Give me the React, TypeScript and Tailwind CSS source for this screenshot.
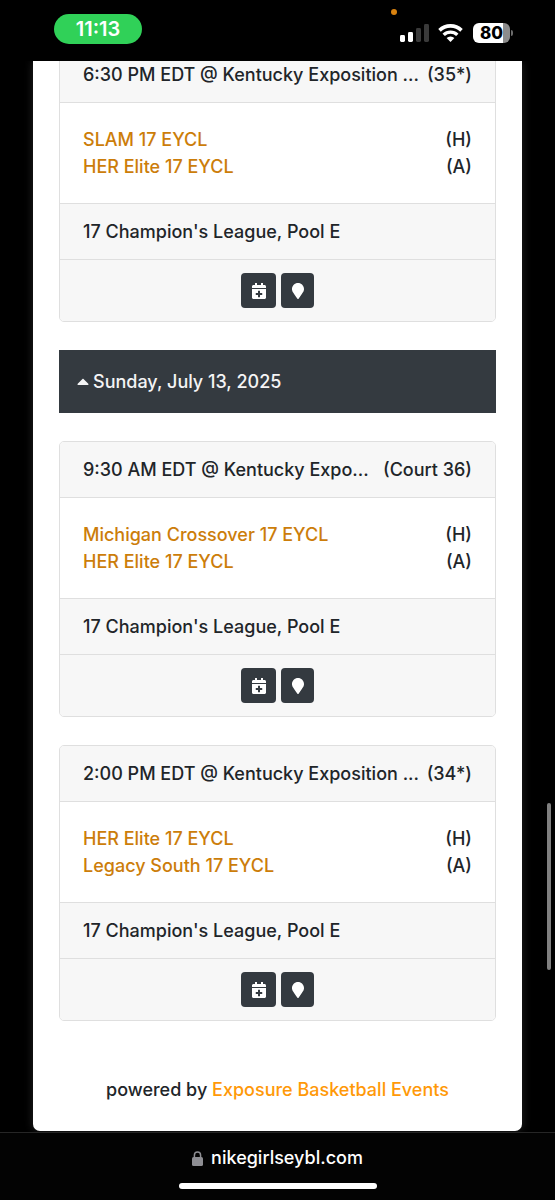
import { FaCalendarPlus, FaCaretUp, FaMapMarker } from "react-icons/fa";

type Game = {
  time: string;
  court: string;
  home: string;
  away: string;
  division: string;
};

const SATURDAY_GAME: Game = {
  time: "6:30 PM EDT @ Kentucky Exposition ...",
  court: "(35*)",
  home: "SLAM 17 EYCL",
  away: "HER Elite 17 EYCL",
  division: "17 Champion's League, Pool E",
};

const SUNDAY_GAMES: Game[] = [
  {
    time: "9:30 AM EDT @ Kentucky Expo...",
    court: "(Court 36)",
    home: "Michigan Crossover 17 EYCL",
    away: "HER Elite 17 EYCL",
    division: "17 Champion's League, Pool E",
  },
  {
    time: "2:00 PM EDT @ Kentucky Exposition ...",
    court: "(34*)",
    home: "HER Elite 17 EYCL",
    away: "Legacy South 17 EYCL",
    division: "17 Champion's League, Pool E",
  },
];

function StatusBar() {
  return (
    <header className="relative flex h-[61px] shrink-0 items-start justify-between bg-black pr-[42px] pl-[54px]">
      <span className="mt-[14px] flex h-[30px] w-[88px] items-center justify-center rounded-full bg-[#30d158] text-[20px] font-semibold">
        11:13
      </span>
      <span className="absolute top-[9px] right-[158px] size-[6px] rounded-full bg-[#d9820f]" />
      <div className="mt-[23px] flex h-5 items-center">
        <svg className="mr-[9px] h-[18px] w-[29px]" viewBox="0 0 29 18" aria-label="Signal">
          <rect x="0" y="11" width="5" height="7" rx="1.4" fill="#fff" />
          <rect x="8" y="8" width="5" height="10" rx="1.4" fill="#fff" />
          <rect x="16" y="4" width="5" height="14" rx="1.4" fill="#3a3a3a" />
          <rect x="24" y="0" width="5" height="18" rx="1.4" fill="#3a3a3a" />
        </svg>
        <svg className="mr-[10px] h-[18px] w-[25px]" viewBox="0 0 25 18" aria-label="Wi-Fi">
          <path d="M1.5 6.4a15.6 15.6 0 0 1 22 0" fill="none" stroke="#fff" strokeWidth="3.6" />
          <path d="M5.7 10.9a9.7 9.7 0 0 1 13.6 0" fill="none" stroke="#fff" strokeWidth="3.4" />
          <path d="M12.5 18l-3.9-3.9a5.6 5.6 0 0 1 7.8 0z" fill="#fff" />
        </svg>
        <div className="flex items-center gap-px">
          <span className="flex h-5 w-[37px] items-center justify-center rounded-[6px] bg-linear-to-r from-white from-80% to-[#8c8c8c] to-80% text-[17px] leading-5 font-extrabold text-black">
            80
          </span>
          <span className="h-[6px] w-[2px] rounded-r-full bg-[#6b6b6b]" />
        </div>
      </div>
    </header>
  );
}

function GameCard({ game }: { game: Game }) {
  return (
    <article className="overflow-hidden rounded-[5px] border border-[#dfdfdf] bg-white">
      <div className="flex justify-between border-b border-[#dfdfdf] bg-[#f7f7f7] px-[23px] py-[14px] whitespace-nowrap">
        <span>{game.time}</span>
        <span>{game.court}</span>
      </div>
      <div className="px-[23px] py-[23px]">
        <div className="flex justify-between">
          <a href="#home" className="text-[#cc7d0a]">{game.home}</a>
          <span>(H)</span>
        </div>
        <div className="flex justify-between">
          <a href="#away" className="text-[#cc7d0a]">{game.away}</a>
          <span>(A)</span>
        </div>
      </div>
      <div className="border-t border-[#dfdfdf] bg-[#f7f7f7] px-[23px] py-[14px]">{game.division}</div>
      <div className="flex justify-center gap-[5px] border-t border-[#dfdfdf] bg-[#f7f7f7] py-[13px]">
        <button
          type="button"
          aria-label="Add to calendar"
          className="flex h-[35px] w-[35px] items-center justify-center rounded-[4px] bg-[#343a40] text-white"
        >
          <FaCalendarPlus className="size-4" />
        </button>
        <button
          type="button"
          aria-label="Show location"
          className="flex h-[35px] w-[33px] items-center justify-center rounded-[4px] bg-[#343a40] text-white"
        >
          <FaMapMarker className="size-4" />
        </button>
      </div>
    </article>
  );
}

function AddressBar() {
  return (
    <footer className="flex h-[68px] shrink-0 flex-col items-center border-t border-[#262626] bg-[#030303]">
      <div className="mt-3 flex items-center gap-2 text-[18px] leading-[26px]">
        <svg className="h-[15px] w-[11px]" viewBox="0 0 11 15" fill="none" aria-hidden="true">
          <rect y="6" width="11" height="9" rx="1.6" fill="#8e8e93" />
          <path d="M2.4 7V4.2a3.1 3.1 0 0 1 6.2 0V7" stroke="#8e8e93" strokeWidth="1.5" />
        </svg>
        <span>nikegirlseybl.com</span>
      </div>
      <span className="mt-3 h-[6px] w-[198px] rounded-full bg-white" />
    </footer>
  );
}

export default function App() {
  return (
    <div className="flex min-h-screen flex-col bg-black font-['Inter','Liberation_Sans',sans-serif] text-[18px] leading-[27px] font-[525] text-white">
      <StatusBar />
      <main className="relative flex-1 overflow-hidden px-[33px]">
        <div className="flex h-full flex-col gap-7 rounded-b-[7px] bg-white px-[26px] pb-[28px] text-[#212529] shadow-[0_0_10px_rgba(255,255,255,0.14)]">
          <div className="-mt-[15px]">
            <GameCard game={SATURDAY_GAME} />
          </div>
          <button
            type="button"
            className="flex items-center gap-1 bg-[#343a40] px-[18px] py-[18px] text-left text-[#f4f4f5]"
          >
            <FaCaretUp className="h-[19px] w-3" />
            Sunday, July 13, 2025
          </button>
          {SUNDAY_GAMES.map((game) => (
            <GameCard key={game.time} game={game} />
          ))}
          <p className="mt-[27px] text-center">
            powered by{" "}
            <a href="#exposure" className="text-[#ff9908]">Exposure Basketball Events</a>
          </p>
        </div>
        <span className="absolute top-[742px] right-1 h-[167px] w-1 rounded-full bg-[#808080]" />
      </main>
      <AddressBar />
    </div>
  );
}
